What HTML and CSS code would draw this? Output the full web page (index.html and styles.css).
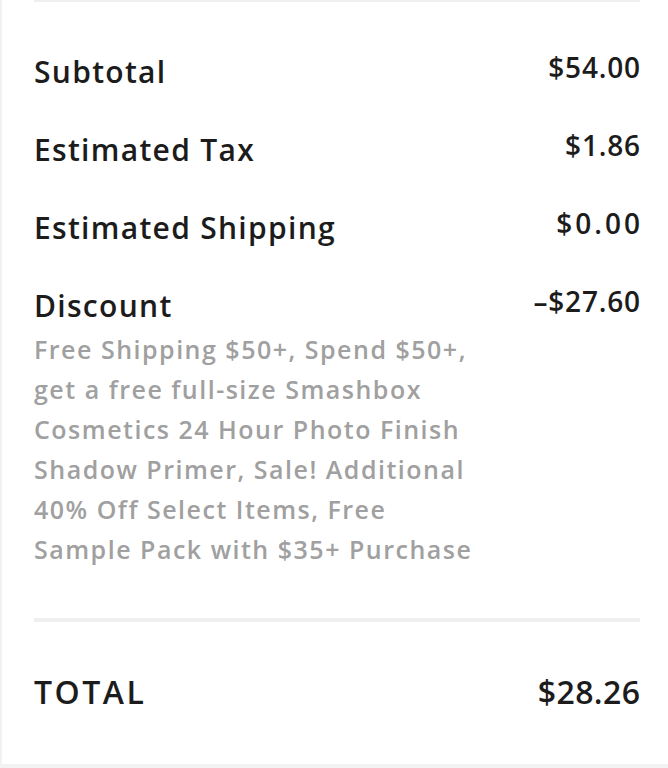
FILE: index.html
```html
<!DOCTYPE html>
<html>
<head>
<meta charset="utf-8">
<link rel="stylesheet" href="styles.css">
</head>
<body>
<div class="summary">
  <div class="divider top"></div>
  <div class="rows">
    <div class="row"><span class="label">Subtotal</span><span class="value">$54.00</span></div>
    <div class="row"><span class="label">Estimated Tax</span><span class="value">$1.86</span></div>
    <div class="row"><span class="label">Estimated Shipping</span><span class="value spaced">$0.00</span></div>
    <div class="row discount">
      <div class="disc-text">
        <span class="label">Discount</span>
        <p class="note">Free Shipping $50+, Spend $50+,<br>get a free full-size Smashbox<br>Cosmetics 24 Hour Photo Finish<br>Shadow Primer, Sale! Additional<br>40% Off Select Items, Free<br>Sample Pack with $35+ Purchase</p>
      </div>
      <span class="value">&#8211;$27.60</span>
    </div>
  </div>
  <div class="divider mid"></div>
  <div class="row total"><span class="total-label">TOTAL</span><span class="total-value">$28.26</span></div>
</div>
</body>
</html>
```
FILE: styles.css
```css
html, body {
  margin: 0;
  padding: 0;
  background: #f2f2f2;
}
body {
  font-family: "Open Sans", Lato, sans-serif;
  color: #1c1c1c;
}
.summary {
  background: #fff;
  margin-left: 2px;
  height: 764px;
  padding: 0 28px 0 32px;
  box-sizing: border-box;
}
.divider {
  height: 2px;
  background: #efefef;
}
.divider.mid {
  height: 4px;
  margin-top: 49px;
}
.rows {
  display: flex;
  flex-direction: column;
  gap: 38px;
  padding-top: 50px;
}
.row {
  display: flex;
  justify-content: space-between;
  align-items: flex-start;
}
.label {
  font-size: 30px;
  font-weight: 600;
  line-height: 40px;
  letter-spacing: 1.3px;
}
.value {
  font-size: 28px;
  font-weight: 600;
  line-height: 30px;
  letter-spacing: 0.8px;
  margin-right: -0.8px;
}
.value.spaced {
  letter-spacing: 3px;
  margin-right: -3px;
}
.discount .label {
  display: block;
}
.note {
  margin: 3px 0 0;
  font-size: 25px;
  font-weight: 600;
  line-height: 40px;
  letter-spacing: 1.5px;
  color: #a0a0a0;
  white-space: nowrap;
}
.total {
  margin-top: 50px;
  align-items: center;
}
.total-label {
  font-size: 32px;
  font-weight: 600;
  letter-spacing: 2.5px;
  line-height: 40px;
}
.total-value {
  font-size: 32px;
  font-weight: 600;
  line-height: 40px;
  letter-spacing: 0.4px;
  margin-right: -0.4px;
}
```
